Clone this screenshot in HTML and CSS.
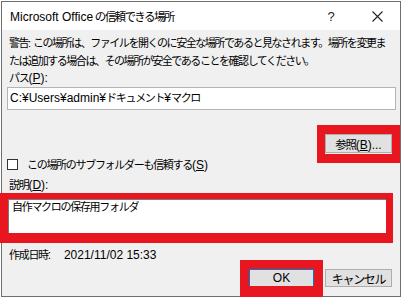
FILE: index.html
```html
<!DOCTYPE html>
<html lang="ja">
<head>
    <meta charset="UTF-8">
    <meta name="viewport" content="width=device-width, initial-scale=1.0">
    <title>Microsoft Office の信頼できる場所</title>
    <link rel="stylesheet" href="styles.css">
</head>
<body>
    <div class="window">
        <div class="titlebar">
            <span class="title"><span class="en">Microsoft Office</span> の信頼できる場所</span>
            <span class="help">?</span>
            <span class="close">
                <svg width="11" height="11" viewBox="0 0 11 11">
                    <path d="M0.5 0.5 L10.5 10.5 M10.5 0.5 L0.5 10.5" stroke="#222" stroke-width="1.1" fill="none"/>
                </svg>
            </span>
        </div>
        <div class="content">
            <p class="warning">警告:&nbsp; この場所は、ファイルを開くのに安全な場所であると見なされます。場所を変更ま<br>たは追加する場合は、その場所が安全であることを確認してください。</p>
            <div class="label">パス<span class="en">(<u>P</u>):</span></div>
            <div class="field path"><span class="en">C:¥Users¥admin¥</span>ドキュメント<span class="en">¥</span>マクロ</div>
            <div class="row-right browse-row">
                <button class="btn browse">参照<span class="en">(<u>B</u>)...</span></button>
            </div>
            <div class="check-row">
                <span class="checkbox"></span>
                <span>この場所のサブフォルダーも信頼する<span class="en">(<u>S</u>)</span></span>
            </div>
            <div class="label desc-label">説明<span class="en">(<u>D</u>):</span></div>
            <div class="field memo">自作マクロの保存用フォルダ</div>
            <div class="date-row">
                <span>作成日時<span class="en">:</span></span>
                <span class="en date">2021/11/02 15:33</span>
            </div>
            <div class="row-right buttons">
                <button class="btn ok">OK</button>
                <button class="btn cancel">キャンセル</button>
            </div>
        </div>

        <!-- red annotation boxes -->
        <div class="mark mark-browse"></div>
        <div class="mark mark-memo"></div>
        <div class="mark mark-ok"></div>
    </div>
</body>
</html>
```

FILE: styles.css
```css
body {
    margin: 0;
    background-color: #ffffff;
    font-family: "Liberation Sans", "Noto Sans CJK JP", sans-serif;
    font-size: 11px;
    color: #000000;
}
.en {
    font-size: 12px;
    letter-spacing: 0;
}
.window {
    position: relative;
    width: 400px;
    height: 296px;
    margin: 1px 0 0 1px;
    box-sizing: border-box;
    border: 1px solid #6e6e6e;
    background-color: #f0f0f0;
}
.titlebar {
    display: flex;
    align-items: center;
    height: 28px;
    background-color: #ffffff;
    letter-spacing: -1.6px;
}
.title {
    flex: 1;
    padding-left: 8px;
    font-size: 11.5px;
}
.help {
    width: 46px;
    text-align: center;
    font-size: 13px;
    letter-spacing: 0;
    color: #222;
}
.close {
    width: 46px;
    display: flex;
    justify-content: center;
}
.content {
    padding: 4px 4px 0 6px;
    letter-spacing: -1.3px;
}
.warning {
    margin: 0 -4px 0 0;
    padding-left: 1px;
    line-height: 18px;
    letter-spacing: -1.45px;
    white-space: nowrap;
}
.label {
    line-height: 16px;
    padding-left: 1px;
}
.field {
    box-sizing: border-box;
    background-color: #ffffff;
    border: 1px solid #b4b4b4;
    padding: 0 2px;
}
.path {
    margin: 1px 0 0 -1px;
    height: 23px;
    line-height: 21px;
}
.row-right {
    display: flex;
    justify-content: flex-end;
    padding-right: 4px;
}
.btn {
    box-sizing: border-box;
    height: 19px;
    padding: 0;
    border: 1px solid #adadad;
    background-color: #e1e1e1;
    font-family: inherit;
    font-size: 11.5px;
    letter-spacing: -1.3px;
    color: #000000;
}
.browse-row {
    margin-top: 24px;
}
.browse {
    width: 67px;
}
.check-row {
    display: flex;
    align-items: center;
    gap: 9px;
    margin-top: 3px;
    height: 16px;
    margin-left: -1px;
}
.checkbox {
    flex-shrink: 0;
    box-sizing: border-box;
    width: 11px;
    height: 11px;
    border: 1px solid #333333;
    background-color: #ffffff;
}
.desc-label {
    margin-top: 5px;
}
.memo {
    margin-top: 6px;
    width: 379px;
    height: 35px;
    line-height: 15px;
    padding-left: 3px;
    border-color: #7a7a7a;
}
.date-row {
    margin-top: 13px;
    line-height: 16px;
    padding-left: 1px;
}
.date {
    margin-left: 11px;
}
.buttons {
    margin-top: 6px;
    gap: 11px;
}
.buttons .btn {
    height: 18px;
    font-size: 12px;
}
.ok {
    width: 65px;
    border-color: #0078d7;
    letter-spacing: 0;
}
.cancel {
    width: 67px;
}
.mark {
    position: absolute;
    box-sizing: border-box;
    border-style: solid;
    border-color: #e8161f;
    pointer-events: none;
}
.mark-browse {
    left: 315px;
    top: 123px;
    width: 83px;
    height: 38px;
    border-width: 9px 8px;
}
.mark-memo {
    left: -2px;
    top: 191px;
    width: 393px;
    height: 50px;
    border-width: 6px 7px 10px 8px;
}
.mark-ok {
    left: 238px;
    top: 258px;
    width: 83px;
    height: 38px;
    border-width: 9px 9px 12px 9px;
}
```
